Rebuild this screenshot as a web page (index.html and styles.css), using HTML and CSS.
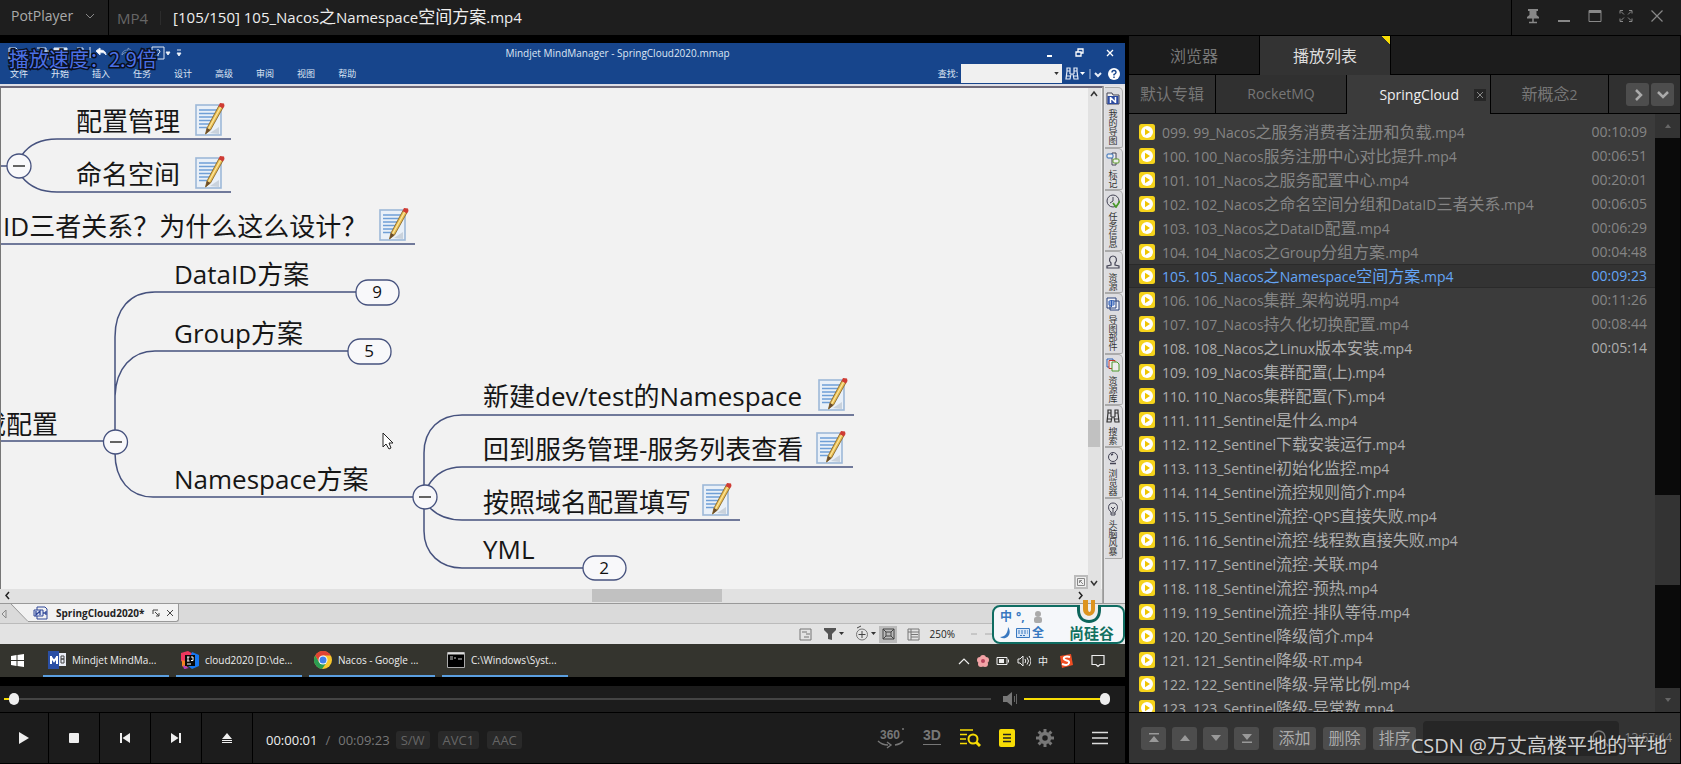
FILE: index.html
```html
<!DOCTYPE html>
<html lang="zh-CN">
<head>
<meta charset="utf-8">
<title>PotPlayer</title>
<link rel="stylesheet" href="styles.css">
</head>
<body>
<svg class="defs" aria-hidden="true">
  <symbol id="note" viewBox="0 0 30 34">
    <rect x="1" y="3" width="25" height="30" fill="#e9f0f8" stroke="#9db8d8" stroke-width="1.6"/>
    <path d="M4 8h18M4 11.500h17M4 15h15M4 18.500h13M4 22h12M4 25.500h8" stroke="#6f9fd6" stroke-width="1.300"/>
    <path d="M15 31l9-6v7z" fill="#aab4c0" opacity=".5"/>
    <path d="M10.500 32l1.500-6L24 3.500l4 2L15.500 28z" fill="#e9bd50" stroke="#8a6a2c" stroke-width=".9"/>
    <path d="M13.500 27L26 4.500" stroke="#fbe7a0" stroke-width="1.200"/>
    <path d="M10.500 32l1.500-6 3.500 2z" fill="#6b4d2c"/>
    <path d="M23.500 4l1.500-3 4 .5.500 2.500-1.500 2.500z" fill="#cf3c34"/>
  </symbol>
  <symbol id="clip" viewBox="0 0 16 16">
    <rect width="16" height="16" rx="2.500" fill="#f5d31b"/>
    <circle cx="8" cy="8" r="6" fill="#fff"/>
    <path d="M6 4.800v6.400L11 8z" fill="#efc400"/>
  </symbol>
  <symbol id="drop" viewBox="0 0 6 4"><path d="M0 0h6L3 4z" fill="currentColor"/></symbol>
</svg>

<div class="app">
  <header class="titlebar">
    <button class="brand" type="button">PotPlayer
      <svg width="10" height="6" viewBox="0 0 10 6"><path d="M1 1l4 4 4-4" fill="none" stroke="#888" /></svg>
    </button>
    <span class="format">MP4</span>
    <h1 class="file" data-mixed>[105/150] 105_Nacos之Namespace空间方案.mp4</h1>
    <div class="window-buttons">
      <button type="button" aria-label="置顶"><svg width="14" height="16" viewBox="0 0 14 16"><path d="M2 1h10v2h-1.500v4L13 9v1.500H1V9l2.500-2V3H2z" fill="#888"/><path d="M7 10v4M3 14.500h8" stroke="#888" stroke-width="1.500"/></svg></button>
      <button type="button" aria-label="最小化"><svg width="14" height="16" viewBox="0 0 14 16"><path d="M1 13h12" stroke="#888" stroke-width="2"/></svg></button>
      <button type="button" aria-label="最大化"><svg width="14" height="16" viewBox="0 0 14 16"><path d="M1 2.500h12v11H1z" fill="none" stroke="#888"/><path d="M1 3.500h12" stroke="#888" stroke-width="3"/></svg></button>
      <button type="button" aria-label="全屏"><svg width="14" height="16" viewBox="0 0 14 16"><path d="M1 5.500v-3h3M10 2.500h3v3M13 10.500v3h-3M4 13.500H1v-3M2 3.500l3 3M12 3.500l-3 3M12 12.500l-3-3M2 12.500l3-3" fill="none" stroke="#888"/></svg></button>
      <button type="button" aria-label="关闭"><svg width="14" height="16" viewBox="0 0 14 16"><path d="M1.500 2.500l11 11M12.500 2.500l-11 11" stroke="#888" stroke-width="1.200"/></svg></button>
    </div>
  </header>

  <main class="player">
    <section class="screen">
      <p class="osd">播放速度：2.9倍</p>
      <div class="ribbon">
        <div class="ribbon-top">
          <svg class="quick" width="182" height="14" viewBox="0 0 182 14" fill="none" stroke="#dfe8f5">
            <path d="M9 2h7l3 3v8H9zM37 2h9v9M40 5h9v8H40z"/><path d="M54 2h13v11H54z" fill="#dfe8f5"/><path d="M75 5h9v8h-9zM77 2h6v3M90 1v11" />
            <path d="M96 5l4-3v2c4 0 6 2 6 5-1-2-3-3-6-2v2z" fill="#fff"/><path d="M132 5l-4-3v2c-4 0-6 2-6 5 1-2 3-3 6-2v2z" opacity=".4"/>
            <path d="M152 1h12v12h-12zM156 5q2-3 4 0 0 2-2 3v2"/><path d="M166 6h4l-2 3zM177 4h4M177 7h4l-2 3z" fill="#fff"/>
          </svg>
          <span class="mind-title">Mindjet MindManager - SpringCloud2020.mmap</span>
          <svg class="mind-window" width="72" height="12" viewBox="0 0 72 12" fill="none" stroke="#fff" stroke-width="1.300"><path d="M2 9h5" stroke-width="2"/><path d="M31 5h5v4h-5zM33 5V2h5v4h-2M62 3l6 6M68 3l-6 6"/></svg>
        </div>
        <nav class="ribbon-menu">
          <a href="#">文件</a><a href="#">开始</a><a href="#">插入</a><a href="#">任务</a><a href="#">设计</a><a href="#">高级</a><a href="#">审阅</a><a href="#">视图</a><a href="#">帮助</a>
          <div class="find">
            <label for="find">查找:</label>
            <span class="find-box"><input id="find" type="text"><svg width="5" height="3"><use href="#drop"/></svg></span>
            <svg width="60" height="16" viewBox="0 0 60 16"><g fill="none" stroke="#e6edf8" stroke-width="1.200"><path d="M2 2h3v3H2zM9 2h3v3H9zM2 5L1 13h4l1-5h2l1 5h4l-1-8M1 10h4M9 10h4M5 5v3M9 5v3"/><path d="M25 3v10" opacity=".6"/><path d="M30 7l3 3 3-3" stroke-width="2"/></g><path d="M15 6h5l-2.500 3z" fill="#fff"/><circle cx="49" cy="8" r="6" fill="#fff"/><path d="M47 6.500q0-2 2-2t2 2q0 1-2 2v1M49 10.500v1.500" fill="none" stroke="#17458c" stroke-width="1.400"/></svg>
          </div>
        </nav>
      </div>

      <div class="workspace">
        <div class="document">
          <div class="canvas">
            <svg class="mindmap" role="img" aria-label="SpringCloud2020 思维导图">
              <g transform="translate(-1 -87)">
                <g class="branch">
                  <path d="M0 165h8M22 154C29 144 40 138 57 138H231M22 176C30 186 41 191 57 191H231M0 243H415M0 440H104"/>
                  <path d="M115 430V336C115 308 130 291 155 291H356M115 395C116 367 132 350 155 350H348M115 452C115 479 130 496 153 496H414"/>
                  <path d="M424 485V452C424 428 440 414 462 414H854M428 485C435 473 446 466 462 466H853M430 507C438 515 448 519 462 519H740M424 507V530C424 553 441 567 462 567H583"/>
                </g>
                <g class="bubble">
                  <circle cx="19" cy="165" r="12"/><circle cx="115.500" cy="441" r="12"/><circle cx="425" cy="496" r="12"/>
                  <rect x="356" y="279" width="43" height="25" rx="12"/><rect x="348" y="338" width="43" height="25" rx="12"/><rect x="583" y="555" width="43" height="24" rx="12"/>
                </g>
                <path class="minus" d="M13 165h12M110 441h12M419 496h12"/>
                <g class="topic">
                  <text x="76" y="130">配置管理</text><text x="76" y="183">命名空间</text><text x="3" y="235">ID三者关系？为什么这么设计？</text>
                  <text x="174" y="283">DataID方案</text><text x="174" y="342">Group方案</text><text x="-20" y="433">载配置</text><text x="174" y="488">Namespace方案</text>
                  <text x="483" y="405">新建dev/test的Namespace</text><text x="483" y="458">回到服务管理-服务列表查看</text><text x="483" y="511">按照域名配置填写</text><text x="483" y="558">YML</text>
                </g>
                <g class="count"><text x="377" y="297">9</text><text x="369" y="356">5</text><text x="604" y="573">2</text></g>
                <use href="#note" x="195" y="101" width="30" height="34"/><use href="#note" x="195" y="154" width="30" height="34"/><use href="#note" x="379" y="206" width="30" height="34"/>
                <use href="#note" x="818" y="376" width="30" height="34"/><use href="#note" x="816" y="429" width="30" height="34"/><use href="#note" x="702" y="481" width="30" height="34"/>
                <path d="M383 432v14l3-3 3 5 2-1-2-5h4z" fill="#fff" stroke="#222"/>
              </g>
            </svg>
            <div class="vscroll">
              <svg width="13" height="12" viewBox="0 0 13 12"><path d="M3 8l3-4 3 4" fill="none" stroke="#333" stroke-width="1.500"/></svg>
              <i class="vthumb"></i>
              <svg width="13" height="12" viewBox="0 0 13 12"><path d="M3 4l3 4 3-4" fill="none" stroke="#333" stroke-width="1.500"/></svg>
            </div>
            <svg class="fit" width="14" height="14" viewBox="0 0 14 14"><path fill="#eee" stroke="#bbb" stroke-width="2" d="M1 1h12v12H1z"/><path d="M3.500 3.500h7v7h-7zM5.500 8V5.500H8M6 6l3 3" fill="none" stroke="#888"/></svg>
          </div>
          <div class="hscroll">
            <svg width="16" height="14" viewBox="0 0 16 14"><path d="M9 3L6 6.500 9 10" fill="none" stroke="#222" stroke-width="1.500"/></svg>
            <i class="hthumb"></i>
            <svg width="10" height="14" viewBox="0 0 10 14"><path d="M3 3l3 3.500L3 10" fill="none" stroke="#222" stroke-width="1.500"/></svg>
          </div>
        </div>
        <aside class="dock">
          <button type="button" class="tall"><svg viewBox="0 0 14 14"><path d="M1 2h5l1 2h6v9H1z" fill="#eee" stroke="#445"/><path d="M1.500 5h11v8h-11z" fill="#2d4ba0"/><path d="M4.500 6v6M9.500 6v6M5 7l4 4" stroke="#fff" stroke-width="1.500"/></svg>我的导图</button>
          <button type="button" class="short"><svg viewBox="0 0 14 14" fill="#eee" stroke="#445"><path d="M6 1h4v12H6z"/><rect x="1" y="2" width="6" height="4" rx="1" stroke="#2c68b5"/><rect x="7" y="7" width="6" height="4" rx="1" stroke="#5b9b29"/></svg>标记</button>
          <button type="button" class="tall"><svg viewBox="0 0 14 14" fill="none" stroke="#445"><circle cx="7" cy="7" r="6"/><path d="M7 3v4L4 9"/><path d="M7 9l3 4 4-6" stroke="#4a9a2b" stroke-width="1.800"/></svg>任务信息</button>
          <button type="button" class="short"><svg viewBox="0 0 14 14"><path d="M5 8C2 5 4 1 7 1s5 4 2 7v2l4 1v2H1v-2l4-1z" fill="none" stroke="#445" stroke-width="1.200"/></svg>资源</button>
          <button type="button" class="tall"><svg viewBox="0 0 14 14" fill="#f0f2f8" stroke="#28407a"><path d="M4 4h9v9H4zM1 1h9v10H1z"/><path d="M3 4h5v4H3zM3 6h5M5.500 3v7" stroke="#2d5cb5"/></svg>导图部件</button>
          <button type="button" class="mid"><svg viewBox="0 0 14 14" fill="#eee"><path d="M1 1h6v8H1z" stroke="#2b5db4"/><path d="M3 2.500h6v8H3z" stroke="#c2382e"/><path d="M6 4h5l2 2v7H6z" stroke="#4e9a2c"/></svg>资源库</button>
          <button type="button" class="short"><svg viewBox="0 0 14 14" fill="none" stroke="#333" stroke-width="1.200"><path d="M2 1h3v3H2zM9 1h3v3H9zM2 4L1 13h4l1-5h2l1 5h4l-1-9M1 10h4M9 10h4M5 4v4M9 4v4"/></svg>搜索</button>
          <button type="button" class="mid"><svg viewBox="0 0 14 14" fill="none" stroke="#445"><circle cx="7" cy="6" r="4.500"/><path d="M4 12.500h6M5 4l2-1" stroke-width="1.500"/></svg>浏览器</button>
          <button type="button" class="tall"><svg viewBox="0 0 14 14" fill="none" stroke="#445"><path d="M5 10C1 7 2 1 7 1s6 6 2 9v3H5zM5 11h4M5 5l2 2 2-2M7 7v3"/></svg>头脑风暴</button>
        </aside>
      </div>

      <div class="sheetbar">
        <svg width="30" height="20" viewBox="0 0 30 20"><path d="M12 0l16 18h2V0z" fill="#f2f2f2"/><path d="M11 0l17 17.500h2" fill="none" stroke="#999"/><path d="M6 6v8L2 10z" fill="#ddd" stroke="#888"/></svg>
        <div class="sheet">
          <svg width="16" height="14" viewBox="0 0 16 14" fill="none" stroke="#2e4697"><path d="M4 1h8l2 2v10H4z"/><path d="M1 4h9v6H1z" fill="#dfe5f5"/><path d="M3 5v4l4-4v4M10 7h3M13 5v4" stroke-width="1.300"/></svg>
          <b>SpringCloud2020*</b>
          <svg width="22" height="10" viewBox="0 0 22 10" fill="none" stroke="#444"><path d="M1 6V2h5M3 4l4 4M7 5v3H4M15 2l6 6M21 2l-6 6"/></svg>
        </div>
      </div>
      <div class="statusbar">
        <svg width="114" height="18" viewBox="0 0 114 18" fill="none" stroke="#777">
          <path d="M13 4h11v11H13zM15 7h5M19 9h4M17 12h5"/><path d="M37 3h12v2l-4 4v6l-4-1V9l-4-4z" fill="#555" stroke="none"/><path d="M52 7h5l-2.500 3z" fill="#333" stroke="none"/><circle cx="75" cy="9.500" r="5.500"/><path d="M75 6v7M71.500 9.500h7M70 3l4-2" stroke="#444"/><path d="M84 7h5l-2.500 3z" fill="#333" stroke="none"/>
          <path d="M92 1h18v17H92z" fill="#bbb" stroke="none"/><path d="M96 4h11v10H96zM96 4l3 3M107 4l-3 3M96 14l3-3M107 14l-3-3M99 7h5v4h-5z" stroke="#444"/>
        </svg>
        <svg width="13" height="18" viewBox="0 0 13 18" fill="none" stroke="#777"><path d="M1 4h11v11H1zM1 7h11M4 9.500h7M4 12h7M4 4v11"/></svg>
        <span>250%</span>
        <svg width="150" height="18" viewBox="0 0 150 18"><path d="M0 9h6M14 9h20" stroke="#aaa"/></svg>
        <div class="ime">
          <svg class="emblem" width="24" height="25" viewBox="0 0 24 25"><path d="M0 6h24v5c0 8-5 13-12 13S0 19 0 11z" fill="#0d655b"/><path d="M3 5h18v6c0 6-3 10-9 10s-9-4-9-10z" fill="#eee"/><path d="M6 1v9c0 9 12 9 12 0V1h-4v9c0 4-3 4-3 0V1z" fill="#dd941f"/></svg>
          <div class="ime-keys">
            <b>中</b><b>°,</b>
            <svg width="12" height="12" viewBox="0 0 12 12" fill="#aaa"><circle cx="6" cy="3" r="3"/><rect x="2" y="6" width="8" height="6" rx="2"/></svg>
            <svg width="12" height="12" viewBox="0 0 12 12"><path d="M8 0c5 7-2 14-8 10 5 0 8-4 8-10z" fill="#3878c0"/></svg>
            <svg width="14" height="12" viewBox="0 0 14 12"><path d="M.5 1.500h13v9H.5z" fill="#d9e7f8" stroke="#3878c0"/><path d="M2 4h10M2 6h10M4 8.500h6" stroke="#3878c0" stroke-dasharray="2 1"/></svg>
            <b>全</b>
          </div>
          <strong>尚硅谷</strong>
        </div>
      </div>
      <div class="taskbar">
        <button type="button" class="start" aria-label="开始"><svg width="13" height="13" viewBox="0 0 13 13"><path d="M0 2l5.500-1v5H0zM6.500 1L13 0v6H6.500zM0 7h5.500v5L0 11zM6.500 7H13v6l-6.500-1z" fill="#fff"/></svg></button>
        <button type="button" class="task"><svg width="18" height="18" viewBox="0 0 18 18"><path d="M0 0h11v18H0z" fill="#2a4fa5"/><path d="M11 2h7v13h-7z" fill="#e8ecf5"/><path d="M3 5v8M9 5v8M3 6l3 4 3-4" stroke="#fff" stroke-width="2" fill="none"/><path d="M13 5h3v3h-3zM13 8h3v4h-3z" fill="none" stroke="#444"/></svg>Mindjet MindMa...</button>
        <button type="button" class="task"><svg width="18" height="18" viewBox="0 0 18 18"><path d="M0 2l7-2 5 3-9 9-3-2z" fill="#f0365d"/><path d="M1 9l6 2-2 7-4-3z" fill="#f58220"/><path d="M11 1l7 3v11l-7 3-5-4z" fill="#1677f0"/><path d="M2 14l6 3-5 1z" fill="#b43ac4"/><path d="M4 4h10v11H4z" fill="#090909"/><path d="M6 6h2.500M7 6v4M6 10h2.500M10 6h2v3.500h-2M6 13h4" stroke="#fff" fill="none"/></svg>cloud2020 [D:\de...</button>
        <button type="button" class="task"><svg width="18" height="18" viewBox="0 0 18 18"><circle cx="9" cy="9" r="9" fill="#f8c72c"/><path d="M1.200 4.500A9 9 0 0 1 16.800 4.500H9L5.100 11.200z" fill="#e04434"/><path d="M1.200 4.500A9 9 0 0 0 8 18l4.900-6.700H5.100z" fill="#2b9c52"/><circle cx="9" cy="9" r="4.500" fill="#fff"/><circle cx="9" cy="9" r="3.500" fill="#3f7fea"/></svg>Nacos - Google ...</button>
        <button type="button" class="task"><svg width="18" height="16" viewBox="0 0 18 16"><path d="M.5.5h17v15H.5z" fill="#000" stroke="#aaa"/><path d="M1 1.500h16" stroke="#ddd" stroke-width="2"/><path d="M3 5h3M7 6h2M3 7h3M11 7h4" stroke="#ccc"/></svg>C:\Windows\Syst...</button>
        <div class="tray">
          <svg width="12" height="8" viewBox="0 0 12 8"><path d="M1 7l5-5 5 5" fill="none" stroke="#eee" stroke-width="1.200"/></svg>
          <svg width="12" height="12" viewBox="0 0 12 12" fill="#f2a3a6"><circle cx="6" cy="3" r="3"/><circle cx="3" cy="5" r="3"/><circle cx="9" cy="5" r="3"/><circle cx="4" cy="9" r="3"/><circle cx="8" cy="9" r="3"/><circle cx="6" cy="6" r="2" fill="#b8435c"/></svg>
          <svg width="14" height="10" viewBox="0 0 14 10"><path d="M1 1.500h10v7H1zM12.500 3.500v3" fill="none" stroke="#eee"/><path d="M3 3h5v4H3z" fill="#eee"/></svg>
          <svg width="14" height="12" viewBox="0 0 14 12" fill="none" stroke="#eee"><path d="M1 4h2l3-3v10L3 8H1zM8 4q1.500 2 0 4M10 2.500q3 3.500 0 7M12 1q4 5 0 10"/></svg>
          <span>中</span>
          <svg class="sogou" width="14" height="14" viewBox="0 0 14 14"><path d="M1 2l11-2 2 11-11 3z" fill="#f04e23"/><path d="M11 3C7 2 4 3 5 5s6 1 5 4-4 2-7 1" fill="none" stroke="#fff" stroke-width="2"/></svg>
          <svg width="14" height="14" viewBox="0 0 14 14"><path d="M1 1.500h12v9H9l-2 2-2-2H1z" fill="none" stroke="#eee" stroke-width="1.200"/></svg>
        </div>
      </div>
    </section>

    <div class="seekbar">
      <input class="seek" type="range" min="0" max="100" value="0" aria-label="播放进度">
      <svg width="15" height="14" viewBox="0 0 15 14"><path d="M0 4h4l5-4v14l-5-4H0z" fill="#777"/><path d="M11.500 4v6M13.500 2v10" stroke="#666"/></svg>
      <input class="volume" type="range" min="0" max="100" value="100" aria-label="音量">
    </div>

    <div class="controls">
      <button type="button" class="transport" aria-label="播放"><svg width="12" height="14" viewBox="0 0 12 14"><path d="M1 1l10 6-10 6z" fill="#eee"/></svg></button>
      <button type="button" class="transport" aria-label="停止"><svg width="12" height="12"><rect x="1" y="1" width="10" height="10" rx="1" fill="#eee"/></svg></button>
      <button type="button" class="transport" aria-label="上一个"><svg width="12" height="12" viewBox="0 0 12 12" fill="#eee"><path d="M1 1h2v10H1zM11 1v10L3.500 6z"/></svg></button>
      <button type="button" class="transport" aria-label="下一个"><svg width="12" height="12" viewBox="0 0 12 12" fill="#eee"><path d="M9 1h2v10H9zM1 1v10l7.500-5z"/></svg></button>
      <button type="button" class="transport" aria-label="打开"><svg width="12" height="12" viewBox="0 0 12 12" fill="#eee"><path d="M6 1l5 6H1zM1 8h10v1H1zM1 10h10v1H1z"/></svg></button>
      <div class="time"><b>00:00:01</b><i>/</i><span>00:09:23</span></div>
      <div class="badges"><span>S/W</span><span>AVC1</span><span>AAC</span></div>
      <div class="tools">
        <button type="button" aria-label="360"><svg width="28" height="22" viewBox="0 0 28 22"><text x="3" y="12" class="glyph">360</text><circle cx="26" cy="2" r="1" fill="#777"/><path d="M1 14q4 4 10 4M26 14q-2 3-8 4M10 15l4 3-4 3" fill="none" stroke="#777" stroke-width="1.400"/></svg></button>
        <button type="button" aria-label="3D"><svg width="18" height="22" viewBox="0 0 18 22"><text x="0" y="13" class="glyph big">3D</text><path d="M0 17.500h18" stroke="#777"/></svg></button>
        <button type="button" aria-label="字幕搜索"><svg width="22" height="20" viewBox="0 0 22 20" fill="none" stroke="#f7dc05"><path d="M1 2h13M1 6.500h7M1 11h6M1 15.500h7" stroke-width="1.500"/><circle cx="14" cy="11" r="4.500" stroke-width="2"/><path d="M17 14l4 4" stroke-width="3"/></svg></button>
        <button type="button" aria-label="播放列表"><svg width="16" height="18" viewBox="0 0 16 18"><rect width="16" height="18" rx="2" fill="#f7dc05"/><path d="M4 5.500h8M4 9h8M4 12.500h8" stroke="#222" stroke-width="1.600"/></svg></button>
        <button type="button" class="gear" aria-label="设置"><svg width="18" height="18" viewBox="0 0 18 18"><circle cx="9" cy="9" r="4.500" fill="none" stroke="#777" stroke-width="3.500"/><path d="M9 0v3M9 15v3M0 9h3M15 9h3M2.600 2.600l2.200 2.200M13.200 13.200l2.200 2.200M2.600 15.400l2.200-2.200M13.200 4.800l2.200-2.200" stroke="#777" stroke-width="3"/></svg></button>
      </div>
      <button type="button" class="transport menu" aria-label="菜单"><svg width="16" height="14" viewBox="0 0 16 14"><path d="M0 1.500h16M0 7h16M0 12.500h16" stroke="#ddd" stroke-width="1.400"/></svg></button>
    </div>
  </main>

  <aside class="panel">
    <div class="main-tabs">
      <button type="button">浏览器</button>
      <button type="button" class="active">播放列表</button>
    </div>
    <div class="album-tabs">
      <button type="button" class="album first">默认专辑</button>
      <button type="button" class="album second">RocketMQ</button>
      <div class="album third active"><button type="button">SpringCloud</button><button type="button" class="close" aria-label="关闭专辑"><svg width="12" height="12" viewBox="0 0 12 12"><path d="M3 3l6 6M9 3l-6 6" stroke="#888"/></svg></button></div>
      <button type="button" class="album fourth" data-mixed>新概念2</button>
      <div class="pager">
        <button type="button" aria-label="下一页"><svg width="10" height="12" viewBox="0 0 10 12"><path d="M3 1l5 5-5 5" fill="none" stroke="#aaa" stroke-width="2.500"/></svg></button>
        <button type="button" aria-label="更多"><svg width="12" height="10" viewBox="0 0 12 10"><path d="M1 2l5 5 5-5" fill="none" stroke="#aaa" stroke-width="2.500"/></svg></button>
      </div>
    </div>
    <div class="list-area">
      <ol class="list" id="list"></ol>
      <div class="scrollbar">
        <button type="button" aria-label="向上"><svg width="6" height="4" viewBox="0 0 6 4"><path d="M0 4h6L3 0z" fill="#666"/></svg></button>
        <i class="thumb"></i>
        <button type="button" aria-label="向下"><svg width="6" height="4"><use href="#drop"/></svg></button>
      </div>
    </div>
    <div class="panel-tools">
      <div class="moves">
        <button type="button" aria-label="置顶"><svg width="10" height="12" viewBox="0 0 10 12"><path d="M0 1h10v1.500H0zM5 4l5 6H0z" fill="#999"/></svg></button>
        <button type="button" aria-label="上移"><svg width="10" height="12" viewBox="0 0 10 12"><path d="M5 3l5 6H0z" fill="#999"/></svg></button>
        <button type="button" aria-label="下移"><svg width="10" height="12" viewBox="0 0 10 12"><path d="M5 9l5-6H0z" fill="#999"/></svg></button>
        <button type="button" aria-label="置底"><svg width="10" height="12" viewBox="0 0 10 12"><path d="M0 9.500h10V11H0zM5 8l5-6H0z" fill="#999"/></svg></button>
      </div>
      <div class="actions"><button type="button">添加</button><button type="button">删除</button><button type="button">排序</button></div>
      <div class="search"><input type="text" aria-label="搜索"><svg width="18" height="18" viewBox="0 0 18 18"><circle cx="8" cy="8" r="6" fill="none" stroke="#777" stroke-width="1.500"/><path d="M12 12l5 5" stroke="#777" stroke-width="2"/></svg></div>
      <time>13:57:44</time>
      <p class="watermark">CSDN @万丈高楼平地的平地</p>
    </div>
  </aside>
</div>
<script src="playlist.js"></script>
</body>
</html>
```

FILE: styles.css
```css
* { box-sizing: border-box; }
body {
  margin: 0;
  background: #000;
  color: #aaa;
  font: 14px/20px "Open Sans", "Noto Sans CJK SC", sans-serif;
}
button {
  margin: 0;
  padding: 0;
  border: 0;
  background: none;
  color: inherit;
  font: inherit;
}
input { min-width: 0; margin: 0; border: 0; }
svg { display: block; flex: none; }
i { font-style: normal; }
.defs { position: absolute; width: 0; height: 0; }
.han { font-size: 16px; }

.app {
  display: grid;
  grid-template-columns: minmax(0, 1fr) 552px;
  grid-template-rows: 36px minmax(0, 1fr);
  column-gap: 4px;
  height: 100vh;
  overflow: hidden;
}

/* Title bar */
.titlebar {
  grid-column: 1 / -1;
  display: flex;
  align-items: center;
  background: #1e1e1e;
  border-bottom: 1px solid #000;
}
.brand {
  display: flex;
  align-items: center;
  gap: 12px;
  height: 35px;
  width: 109px;
  padding-left: 11px;
  padding-bottom: 3px;
  border-right: 1px solid #000;
}
.format { padding: 0 12px 0 8px; border-right: 1px solid #2c2c2c; color: #666; font-size: 15px; line-height: 14px; }
.file { flex: 1; margin: 0; padding: 0 0 2px 12px; color: #eee; font-size: 15px; font-weight: 400; }
.file .han { font-size: 17px; }
.window-buttons {
  display: flex;
  align-items: center;
  gap: 17px;
  height: 35px;
  padding: 0 17px 3px 14px;
  border-left: 1px solid #000;
}

/* Player column */
.player { display: flex; flex-direction: column; min-width: 0; }
.screen {
  position: relative;
  flex: 1;
  min-height: 0;
  display: flex;
  flex-direction: column;
  margin: 7px 0 9px;
  background: #e3e3e3;
  color: #222;
  font-size: 10px;
  line-height: 14px;
}
.osd {
  position: absolute;
  left: 9px;
  top: 4px;
  margin: 0;
  color: #4b70e6;
  font: 20px/24px "Noto Sans CJK SC", sans-serif;
  -webkit-text-stroke: 3px #0a1020;
  paint-order: stroke fill;
}
.ribbon { height: 41px; background: #17458c; color: #dde6f4; }
.ribbon-top { display: flex; align-items: center; justify-content: space-between; height: 20px; padding-right: 8px; }
.mind-title { margin-right: 232px; margin-left: 240px; }
.ribbon-menu { display: flex; gap: 23px; align-items: center; height: 21px; padding-left: 10px; font-size: 9px; }
.ribbon-menu a { color: inherit; text-decoration: none; white-space: nowrap; }
.find { display: flex; align-items: center; gap: 3px; margin-left: auto; }
.find-box { display: flex; align-items: center; width: 101px; height: 19px; padding-right: 3px; background: #f0f0f0; color: #333; }
.find-box input { flex: 1; height: 17px; background: none; }

.workspace { flex: 1; min-height: 0; display: flex; padding-top: 2px; background: #dedee6; }
.document { flex: 1; min-width: 0; display: flex; flex-direction: column; border-top: 2px solid #6d6878; border-right: 1px solid #aaa; }
.canvas { position: relative; flex: 1; min-height: 0; display: flex; border-left: 1px solid #777; background: #f2f2f2; }
.mindmap { flex: 1; min-width: 0; height: 100%; }
.branch { fill: none; stroke: #46527e; stroke-width: 1.5; }
.bubble { fill: #f8f8fa; stroke: #46527e; stroke-width: 1.3; }
.minus { stroke: #333; stroke-width: 1.5; }
.topic { fill: #161616; font-size: 26px; }
.count { fill: #111; font-size: 17px; text-anchor: middle; }
.vscroll { display: flex; flex-direction: column; width: 13px; margin-right: 1px; background: #e2e2e2; }
.vthumb { height: 27px; margin: auto 1px 130px 0; background: #c1c1c1; }
.fit { position: absolute; right: 14px; bottom: 0; }
.hscroll { display: flex; height: 14px; background: #e1e1e1; padding-right: 16px; }
.hthumb { width: 130px; height: 13px; margin: 0 auto 0 53%; background: #c1c1c1; }

.dock { width: 22px; padding: 1px 2px 0 1px; border-left: 1px solid #999; background: #e4e4e6; }
.dock button {
  display: flex;
  flex-direction: column;
  align-items: center;
  gap: 4px;
  width: 18px;
  padding: 3px 4px 0 3px;
  border: 1px solid #aaa;
  border-width: 1px 1px 1px 0;
  border-radius: 0 5px 2px 0;
  background: #dddde0;
  color: #333;
  font-size: 9px;
  line-height: 9px;
  word-break: break-all;
}
.dock svg { width: 14px; height: 14px; }
.dock .tall { height: 61px; }
.dock .mid { height: 51px; }
.dock .short { height: 42px; }

.sheetbar { display: flex; height: 21px; border-top: 1px solid #999; border-bottom: 1px solid #bbb; background: #dadada; }
.sheet { display: flex; align-items: center; gap: 7px; height: 18px; padding: 0 4px 0 3px; border: 1px solid #999; border-width: 0 1px 1px 0; background: #f2f2f2; border-radius: 0 0 3px 0; }
.statusbar { position: relative; display: flex; align-items: center; justify-content: flex-end; height: 20px; background: #e3e3e3; gap: 6px; padding-right: 4px; }
.statusbar span { padding: 0 10px 0 4px; }
.ime {
  position: absolute;
  right: 0;
  bottom: 0;
  display: flex;
  align-items: center;
  width: 133px;
  height: 39px;
  padding: 0 9px 0 6px;
  border: 2px solid #0f6d62;
  border-radius: 8px;
  background: #f5f7fa;
}
.emblem { position: absolute; right: 22px; top: -8px; }
.ime-keys { display: grid; grid-template-columns: repeat(3, 14px); grid-auto-rows: 16px; gap: 0 2px; align-items: center; color: #3878c0; font-size: 12px; }
.ime strong { margin: 16px 0 0 auto; color: #117060; font-size: 15px; line-height: 16px; }

.taskbar { display: flex; align-items: center; height: 33px; padding-right: 20px; background: #34342e; color: #eee; }
.start { width: 43px; padding-left: 11px; }
.task { display: flex; align-items: center; gap: 6px; width: 126px; height: 33px; margin-right: 7px; padding-left: 5px; border-bottom: 2px solid #5b9fe0; white-space: nowrap; }
.tray { display: flex; align-items: center; gap: 7px; margin-left: auto; }
.sogou { margin: 0 11px 0 4px; }

/* Seek bar and transport controls */
.seekbar { display: flex; align-items: center; height: 26px; padding: 0 15px 0 4px; background: #1c1c1c; }
input[type="range"] { appearance: none; height: 12px; background: none; }
input[type="range"]::-webkit-slider-runnable-track { height: 2px; }
input[type="range"]::-webkit-slider-thumb { appearance: none; width: 10px; height: 12px; margin-top: -5px; border-radius: 6px; background: #eee; }
.seek { flex: 1; margin-right: 12px; padding-left: 5px; background: linear-gradient(90deg, #f7dc05 0 8px, #444 8px) center / 100% 2px no-repeat !important; }
.volume { width: 86px; margin-left: 6px; background: linear-gradient(#f7dc05, #f7dc05) center / 100% 2px no-repeat !important; }
.controls { display: flex; align-items: center; height: 52px; border: 1px solid #000; border-width: 1px 0; background: #1c1c1c; }
.transport { display: grid; place-items: center; width: 51px; height: 50px; border-right: 1px solid #000; }
.transport:first-child { width: 49px; }
.menu { border-right: 0; border-left: 1px solid #000; }
.time { display: flex; gap: 8px; padding: 3px 0 0 13px; color: #777; font-size: 13px; }
.time b { color: #eee; font-weight: 400; }
.badges { display: flex; gap: 8px; padding: 3px 0 0 6px; color: #666; font-size: 13px; line-height: 18px; }
.badges span { padding: 0 5px; border-radius: 3px; background: #292929; }
.tools { display: flex; align-items: center; gap: 18px; margin: 0 20px 0 auto; }
.tools button { display: block; }
.tools .gear { margin-left: 3px; }
.glyph { fill: #777; font: bold 12px "Liberation Sans", sans-serif; }
.glyph.big { font-size: 14px; }

/* Playlist panel */
.panel { display: flex; flex-direction: column; min-width: 0; border-right: 1px solid #000; border-bottom: 1px solid #000; background: #333; }
.main-tabs { display: flex; height: 39px; background: #1c1c1c; color: #777; font-size: 16px; border-bottom: 1px solid #000; }
.main-tabs button { width: 131px; height: 39px; border-right: 1px solid #000; }
.main-tabs .active { background: linear-gradient(225deg, #f7dc05 6px, transparent 6px) #333; color: #ddd; }
.album-tabs { display: flex; height: 39px; background: #303030; color: #777; border-bottom: 1px solid #000; }
.album { height: 38px; border-right: 1px solid #000; }
.first { width: 87px; font-size: 16px; }
.second { width: 131px; }
.third { display: flex; width: 144px; height: 39px; justify-content: flex-end; gap: 15px; align-items: center; padding-right: 4px; background: #3b3b3b; color: #eee; }
.fourth { width: 118px; }
.close { width: 12px; height: 12px; background: #262626; }
.pager { display: flex; gap: 2px; margin: 8px 6px 0 auto; }
.pager button, .panel-tools button { display: grid; place-items: center; height: 23px; border-radius: 3px; background: #4d4d4d; }
.pager button { width: 23px; }
.list-area { flex: 1; min-height: 0; display: flex; background: #3b3b3b; }
.list { flex: 1; min-width: 0; margin: 0; padding: 6px 0 0; list-style: none; overflow: hidden; }
.row { display: flex; align-items: center; height: 24px; padding: 0 8px 0 10px; color: #adadad; white-space: nowrap; }
.row svg { margin-right: 7px; }
.row span:last-child { margin-left: auto; }
.row.seen { color: #858585; }
.row.current { background: #333; box-shadow: inset 0 1px #2a2a2a, inset 0 -1px #2a2a2a; color: #64a5f5; }
.scrollbar { display: flex; flex-direction: column; width: 25px; background: #0a0a0a; color: #666; }
.scrollbar button { display: grid; place-items: center; height: 24px; background: #333; }
.thumb { height: 90px; margin: auto 0 103px; background: #333; }
.panel-tools { position: relative; display: flex; align-items: center; height: 51px; padding: 0 8px 0 12px; border-top: 1px solid #000; background: #333; }
.moves, .actions { display: flex; gap: 6px; }
.actions { gap: 7px; margin: 0 7px 0 14px; font-size: 16px; }
.moves button { width: 25px; }
.panel-tools .actions button { width: 43px; }
.search { display: flex; align-items: center; flex: 1; min-width: 0; height: 35px; padding-right: 10px; border-radius: 4px; background: #262626; }
.search input { flex: 1; background: none; color: #aaa; }
.panel-tools time { margin-left: 6px; font-size: 12px; color: #888; }
.watermark { position: absolute; right: 13px; bottom: 3px; margin: 0; color: #d0d0d0; font-size: 20px; line-height: 28px; text-shadow: 1px 1px 1px #222; white-space: nowrap; }
```

FILE: playlist.js
```js
const clips = [
  ["99_Nacos之服务消费者注册和负载", "00:10:09"],
  ["100_Nacos服务注册中心对比提升", "00:06:51"],
  ["101_Nacos之服务配置中心", "00:20:01"],
  ["102_Nacos之命名空间分组和DataID三者关系", "00:06:05"],
  ["103_Nacos之DataID配置", "00:06:29"],
  ["104_Nacos之Group分组方案", "00:04:48"],
  ["105_Nacos之Namespace空间方案", "00:09:23"],
  ["106_Nacos集群_架构说明", "00:11:26"],
  ["107_Nacos持久化切换配置", "00:08:44"],
  ["108_Nacos之Linux版本安装", "00:05:14"],
  ["109_Nacos集群配置(上)", ""],
  ["110_Nacos集群配置(下)", ""],
  ["111_Sentinel是什么", ""],
  ["112_Sentinel下载安装运行", ""],
  ["113_Sentinel初始化监控", ""],
  ["114_Sentinel流控规则简介", ""],
  ["115_Sentinel流控-QPS直接失败", ""],
  ["116_Sentinel流控-线程数直接失败", ""],
  ["117_Sentinel流控-关联", ""],
  ["118_Sentinel流控-预热", ""],
  ["119_Sentinel流控-排队等待", ""],
  ["120_Sentinel降级简介", ""],
  ["121_Sentinel降级-RT", ""],
  ["122_Sentinel降级-异常比例", ""],
  ["123_Sentinel降级-异常数", ""]
];
const current = 105;

// Chinese runs are set slightly larger than the Latin text around them.
const mixed = text => text.replace(/[\u4e00-\u9fff]+/g, '<span class="han">$&</span>');

document.querySelectorAll("[data-mixed]").forEach(el => {
  el.innerHTML = mixed(el.textContent);
});

document.getElementById("list").innerHTML = clips.map(([name, length], i) => {
  const number = 99 + i;
  const state = number === current ? " current" : number < 108 ? " seen" : "";
  const label = String(number).padStart(3, "0") + ". " + name + ".mp4";
  return `<li class="row${state}"><svg width="16" height="16"><use href="#clip"/></svg><div>${mixed(label)}</div><span>${length}</span></li>`;
}).join("");
```
